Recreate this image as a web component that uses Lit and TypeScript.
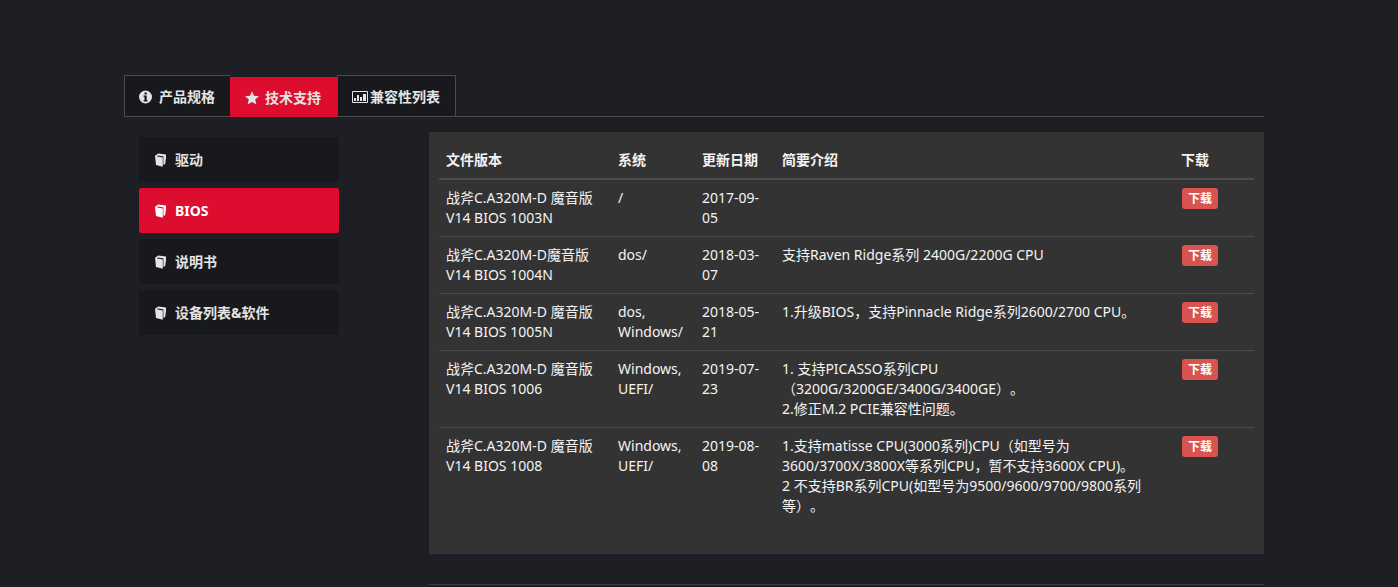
import { LitElement, html, css, svg } from "lit";
import { customElement, state } from "lit/decorators.js";

interface Release {
  version: string;
  os: string;
  date: string;
  notes: string[];
}

const RELEASES: Release[] = [
  { version: "战斧C.A320M-D 魔音版 V14 BIOS 1003N", os: "/", date: "2017-09-05", notes: [] },
  { version: "战斧C.A320M-D魔音版 V14 BIOS 1004N", os: "dos/", date: "2018-03-07", notes: ["支持Raven Ridge系列 2400G/2200G CPU"] },
  { version: "战斧C.A320M-D 魔音版 V14 BIOS 1005N", os: "dos, Windows/", date: "2018-05-21", notes: ["1.升级BIOS，支持Pinnacle Ridge系列2600/2700 CPU。"] },
  {
    version: "战斧C.A320M-D 魔音版 V14 BIOS 1006",
    os: "Windows, UEFI/",
    date: "2019-07-23",
    notes: ["1. 支持PICASSO系列CPU", "（3200G/3200GE/3400G/3400GE）。", "2.修正M.2 PCIE兼容性问题。"],
  },
  {
    version: "战斧C.A320M-D 魔音版 V14 BIOS 1008",
    os: "Windows, UEFI/",
    date: "2019-08-08",
    notes: [
      "1.支持matisse CPU(3000系列)CPU（如型号为",
      "3600/3700X/3800X等系列CPU，暂不支持3600X CPU)。",
      "2 不支持BR系列CPU(如型号为9500/9600/9700/9800系列等）。",
    ],
  },
];

const infoIcon = svg`<path fill-rule="evenodd" d="M6.500.5a6.500 6.500 0 1 1 0 13 6.500 6.500 0 0 1 0-13ZM5.500 2.500v2h2.200v-2ZM4.500 5.600v1.200h1v3.400h-1v1.200h4.200v-1.200h-1V5.600Z"/>`;
const starIcon = svg`<path d="M7 .2l2 4.600 5 .4-3.800 3.400 1.200 5L7 11l-4.400 2.600 1.200-5L0 5.200l5-.4Z"/>`;
const chartIcon = svg`<path fill-rule="evenodd" d="M1 1h14a1 1 0 0 1 1 1v10a1 1 0 0 1-1 1H1a1 1 0 0 1-1-1V2a1 1 0 0 1 1-1ZM1 2v10h14V2Z"/><path d="M2 8h2v3H2ZM5 5h2v6H5ZM8 7h2v4H8ZM11 4h3v7h-3Z"/>`;
const bookIcon = svg`<path d="M1 2.800 4.300.6l7.700 1v1.800L9.800 11.600v-8L4.200 2.400 2.600 3.200l6.200 1.400v9.200L2 12Z"/><path d="M9.500 3.600 12 2.200v2L11.200 11l-1.700 1Z"/>`;

@customElement("app-root")
export class AppRoot extends LitElement {
  @state() private tab = 1;
  @state() private section = 1;

  private tabs = [
    { label: "产品规格", icon: infoIcon, width: 14, tight: false },
    { label: "技术支持", icon: starIcon, width: 14, tight: false },
    { label: "兼容性列表", icon: chartIcon, width: 16, tight: true },
  ];

  private sections = ["驱动", "BIOS", "说明书", "设备列表&软件"];

  static styles = css`
    :host {
      display: block;
      box-sizing: border-box;
      min-height: 100vh;
      padding: 75px 10px 0 0;
      background: #1e1f25;
      color: #f4f4f4;
      font: 14px/20px "Noto Sans", "Noto Sans CJK SC", sans-serif;
      text-spacing-trim: space-all;
    }
    * {
      box-sizing: border-box;
    }
    button {
      margin: 0;
      font: inherit;
      font-weight: 700;
      color: #e4e4e4;
      cursor: pointer;
    }
    svg {
      flex: none;
      fill: currentColor;
    }
    .container {
      max-width: 1140px;
      margin: 0 auto;
    }
    .tabs {
      display: flex;
      align-items: flex-end;
      border-bottom: 1px solid #4c4c50;
    }
    .tab {
      display: flex;
      align-items: center;
      gap: 6px;
      height: 42px;
      margin-bottom: -1px;
      padding: 2px 15px 0 14px;
      border: 1px solid #4c4c50;
      border-right: 0;
      background: #17191c;
    }
    .tab:last-child {
      border-right: 1px solid #4c4c50;
    }
    .tab.tight {
      gap: 2px;
    }
    .tab.active {
      height: 40px;
      padding-right: 16px;
      border-color: #dc0d2f;
      background: #dc0d2f;
    }
    .layout {
      display: flex;
      align-items: flex-start;
      padding-top: 15px;
    }
    .side {
      display: flex;
      flex: none;
      flex-direction: column;
      gap: 6px;
      width: 305px;
      padding: 5px 90px 0 15px;
    }
    .item {
      display: flex;
      align-items: center;
      gap: 8px;
      height: 45px;
      padding: 0 15px;
      border: 0;
      border-radius: 2px;
      background: #17191c;
    }
    .item.active {
      background: #dc0d2f;
      color: #fff;
    }
    .main {
      flex: 1;
      min-width: 0;
    }
    .panel {
      padding: 10px 10px 30px;
      background: #333;
    }
    .rule {
      margin: 30px 0 0;
      border: 0;
      border-top: 1px solid #3c3c42;
    }
    table {
      width: 100%;
      table-layout: fixed;
      border-collapse: separate;
      border-spacing: 0;
    }
    th,
    td {
      padding: 8px 8px 8px 7px;
      text-align: left;
      vertical-align: top;
    }
    th {
      border-bottom: 2px solid #4c4c4c;
    }
    tr + tr td {
      border-top: 1px solid #4c4c4c;
    }
    .version {
      width: 172px;
    }
    .os {
      width: 84px;
    }
    .date,
    .get {
      width: 80px;
    }
    .download {
      display: block;
      width: 36px;
      border-radius: 3px;
      background: #d9534f;
      color: #fff;
      font-size: 12px;
      font-weight: 700;
      line-height: 21px;
      text-align: center;
      text-decoration: none;
    }
    .action {
      padding: 8px 8px 0;
    }
  `;

  render() {
    return html`
      <div class="container">
        <nav class="tabs">
          ${this.tabs.map(
            (t, i) => html`<button
              class="tab ${t.tight ? "tight" : ""} ${i === this.tab ? "active" : ""}"
              @click=${() => (this.tab = i)}
            ><svg width=${t.width} height="14" viewBox="0 0 ${t.width} 14" aria-hidden="true">${t.icon}</svg>${t.label}</button>`
          )}
        </nav>
        <div class="layout">
          <nav class="side">
            ${this.sections.map(
              (s, i) => html`<button class="item ${i === this.section ? "active" : ""}" @click=${() => (this.section = i)}
                ><svg width="13" height="14" viewBox="0 0 13 14" aria-hidden="true">${bookIcon}</svg>${s}</button>`
            )}
          </nav>
          <main class="main">
            <div class="panel">
              <table>
                <thead>
                  <tr>
                    <th class="version">文件版本</th>
                    <th class="os">系统</th>
                    <th class="date">更新日期</th>
                    <th>简要介绍</th>
                    <th class="get">下载</th>
                  </tr>
                </thead>
                <tbody>
                  ${RELEASES.map(
                    (r) => html`<tr>
                      <td>${r.version}</td>
                      <td>${r.os}</td>
                      <td>${r.date}</td>
                      <td>${r.notes.map((n) => html`<div>${n}</div>`)}</td>
                      <td class="action"><a class="download" href="#">下载</a></td>
                    </tr>`
                  )}
                </tbody>
              </table>
            </div>
            <hr class="rule" />
          </main>
        </div>
      </div>
    `;
  }
}
